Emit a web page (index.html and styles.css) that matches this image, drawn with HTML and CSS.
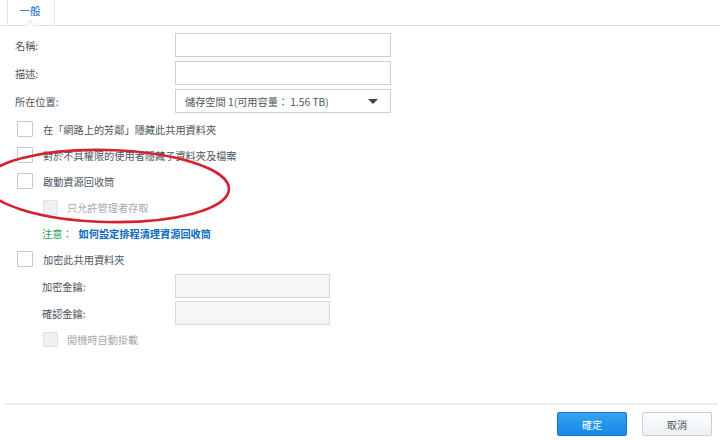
FILE: index.html
```html
<!DOCTYPE html>
<html>
<head>
<meta charset="utf-8">
<link rel="stylesheet" href="styles.css">
</head>
<body>
<div class="page">
  <div class="tabbar">
    <div class="tab">一般<span class="notch"></span></div>
  </div>
  <div class="form">
    <div class="row field"><span class="label">名稱:</span><span class="input"></span></div>
    <div class="row field"><span class="label">描述:</span><span class="input"></span></div>
    <div class="row field"><span class="label">所在位置:</span><span class="input select"><span>儲存空間 1(可用容量： 1.56 TB)</span><span class="caret"></span></span></div>
    <div class="cbrow first"><span class="cb"></span><span>在「網路上的芳鄰」隱藏此共用資料夾</span></div>
    <div class="cbrow"><span class="cb"></span><span>對於不具權限的使用者隱藏子資料夾及檔案</span></div>
    <div class="cbrow"><span class="cb"></span><span>啟動資源回收筒</span></div>
    <div class="cbrow sub disabled"><span class="cb"></span><span>只允許管理者存取</span></div>
    <div class="cbrow note"><span class="green">注意：</span><span class="link">如何設定排程清理資源回收筒</span></div>
    <div class="cbrow"><span class="cb"></span><span>加密此共用資料夾</span></div>
    <div class="row field enc"><span class="label">加密金鑰:</span><span class="input dis"></span></div>
    <div class="row field enc"><span class="label">確認金鑰:</span><span class="input dis"></span></div>
    <div class="cbrow sub disabled"><span class="cb"></span><span>開機時自動掛載</span></div>
  </div>
  <div class="footer">
    <button class="btn primary">確定</button>
    <button class="btn">取消</button>
  </div>
  <svg class="annot" width="280" height="96" viewBox="0 0 280 96">
    <ellipse cx="127" cy="46" rx="122" ry="36" transform="rotate(1.5 127 46)" fill="none" stroke="#d42230" stroke-width="2.6"/>
  </svg>
</div>
</body>
</html>
```
FILE: styles.css
```css
* { box-sizing: border-box; }
html, body { margin: 0; padding: 0; background: #fff; }
body {
  font-family: "Noto Sans CJK TC", "Liberation Sans", sans-serif;
  font-size: 10.2px;
  color: #4c555e;
  width: 720px;
  height: 440px;
  overflow: hidden;
}
.page { position: relative; width: 720px; height: 440px; }
.tabbar {
  height: 26px;
  border-bottom: 1px solid #dfe3e7;
  padding-left: 7px;
}
.tab {
  position: relative;
  width: 48px;
  height: 25px;
  border-left: 1px solid #e3e7eb;
  border-right: 1px solid #e3e7eb;
  color: #0b6bc0;
  font-size: 10.5px;
  text-align: center;
  padding-top: 3px;
  padding-right: 2px;
}
.notch {
  position: absolute;
  left: 18px;
  bottom: -5px;
  width: 8px;
  height: 8px;
  background: #fff;
  border-left: 1px solid #dfe3e7;
  border-top: 1px solid #dfe3e7;
  transform: rotate(45deg);
}
.form { padding: 7px 0 0 15px; }
.row { display: flex; align-items: center; height: 24px; margin-bottom: 4px; }
.label { width: 160px; }
.input {
  width: 216px;
  height: 24px;
  border: 1px solid #c9d0d6;
  background: #fff;
  display: flex;
  align-items: center;
}
.select { padding: 0 12px 0 9px; justify-content: space-between; color: #4c555e; }
.caret {
  width: 0; height: 0;
  border-left: 5px solid transparent;
  border-right: 5px solid transparent;
  border-top: 5px solid #3d4650;
}
.cbrow { display: flex; align-items: center; height: 26px; }
.cbrow.first { margin-top: -1px; }
.cb {
  width: 16px; height: 16px;
  border: 1px solid #c3cad1;
  background: #fff;
  border-radius: 1px;
  margin: 0 10px 0 2px;
}
.sub { padding-left: 26px; }
.sub .cb { width: 15px; height: 15px; border-color: #dde2e7; background: #eef1f4; margin-right: 9px; }
.disabled { color: #a3aab1; }
.note { padding-left: 27px; }
.green { color: #23a05a; margin-right: 6px; }
.link { color: #0b6bc0; font-weight: bold; }
.enc { padding-left: 27px; margin-top: 2px; margin-bottom: 1px; }
.enc .label { width: 133px; }
.enc .input { width: 155px; background: #f5f6f8; border-color: #d3d9de; }
.enc + .enc { margin-top: 3px; }
.footer {
  position: absolute;
  left: 5px;
  right: 2px;
  top: 403px;
  border-top: 2px solid #ebedef;
  display: flex;
  justify-content: flex-end;
  gap: 15px;
  padding: 7px 6px 0 0;
}
.btn {
  width: 70px;
  height: 24px;
  font-family: inherit;
  font-size: 10.2px;
  border: 1px solid #c9d0d6;
  border-radius: 2px;
  background: linear-gradient(#fbfcfd, #eef1f4);
  color: #4c555e;
  padding: 0;
}
.btn.primary {
  background: linear-gradient(#35a2f2, #1589e6);
  border-color: #1479cc;
  color: #fff;
}
.annot { position: absolute; left: -20px; top: 140px; pointer-events: none; }
```
